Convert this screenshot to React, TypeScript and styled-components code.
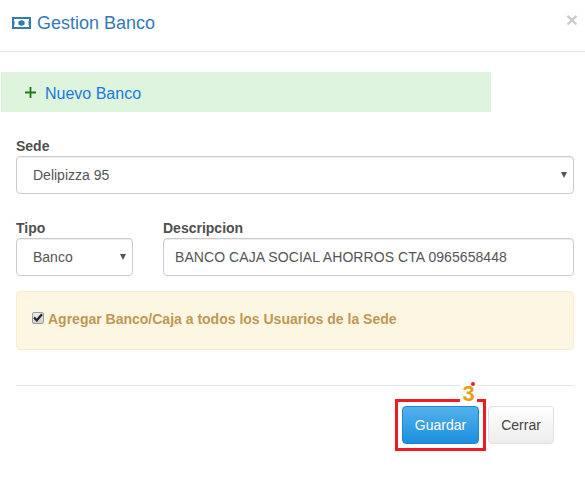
import React from "react";
import styled, { createGlobalStyle } from "styled-components";

const GlobalStyle = createGlobalStyle`
  html, body {
    margin: 0;
    padding: 0;
    background: #fff;
  }
  * {
    box-sizing: border-box;
  }
`;

export default function App() {
  return (
    <>
      <GlobalStyle />
      <Modal>
        <Header>
          <Title>
            <svg width="19" height="12" viewBox="0 0 19 12">
              <path
                fill="#337ab7"
                fillRule="evenodd"
                d="M0 0h19v12H0zM2.5 2v8h14V2z"
              />
              <path fill="#fff" d="M2 2h2.5L2 4.5zM14.5 2H17v2.5zM2 7.5L4.5 10H2zM17 7.5V10h-2.5z" />
              <ellipse cx="9.5" cy="6" rx="3.2" ry="2.8" fill="#337ab7" />
            </svg>
            Gestion Banco
          </Title>
          <Close>×</Close>
        </Header>
        <Banner>
          <svg width="11" height="11" viewBox="0 0 11 11">
            <path fill="#1f7a12" d="M4.6 0h1.8v4.6H11v1.8H6.4V11H4.6V6.4H0V4.6h4.6z" />
          </svg>
          <BannerLink>Nuevo Banco</BannerLink>
        </Banner>
        <Body>
          <Field>
            <Label>Sede</Label>
            <SelectBox>
              <SelectControl defaultValue="Delipizza 95">
                <option>Delipizza 95</option>
              </SelectControl>
            </SelectBox>
          </Field>
          <Row>
            <TipoField>
              <Label>Tipo</Label>
              <SelectBox>
                <SelectControl defaultValue="Banco">
                  <option>Banco</option>
                </SelectControl>
              </SelectBox>
            </TipoField>
            <DescField>
              <Label>Descripcion</Label>
              <TextInput defaultValue="BANCO CAJA SOCIAL AHORROS CTA 0965658448" />
            </DescField>
          </Row>
          <Alert>
            <CheckBox>
              <svg width="10" height="9" viewBox="0 0 10 9">
                <path fill="none" stroke="#222" strokeWidth="2.2" d="M1 4.5l2.8 2.8L9 1.2" />
              </svg>
            </CheckBox>
            Agregar Banco/Caja a todos los Usuarios de la Sede
          </Alert>
          <Divider />
          <Footer>
            <SaveButton>Guardar</SaveButton>
            <CloseButton>Cerrar</CloseButton>
            <Highlight>
              <StepNumber>3</StepNumber>
              <StepDot />
            </Highlight>
          </Footer>
        </Body>
      </Modal>
    </>
  );
}

const Modal = styled.div`
  width: 585px;
  height: 482px;
  background: #fff;
  font-family: "Liberation Sans", Arial, sans-serif;
  font-size: 14px;
  color: #555;
  overflow: hidden;
`;

const Header = styled.div`
  display: flex;
  align-items: center;
  justify-content: space-between;
  height: 52px;
  padding: 0 7px 5px 12px;
  border-bottom: 1px solid #e5e5e5;
`;

const Title = styled.h4`
  display: flex;
  align-items: center;
  gap: 6px;
  margin: 0;
  font-size: 18px;
  font-weight: 400;
  color: #337ab7;
`;

const Close = styled.span`
  margin-bottom: 7px;
  font-size: 21px;
  font-weight: 700;
  line-height: 1;
  color: #000;
  opacity: 0.2;
`;

const Banner = styled.div`
  display: flex;
  align-items: center;
  gap: 9px;
  width: 490px;
  height: 40px;
  margin: 20px 0 0 1px;
  padding-left: 24px;
  background: #dff4dc;
`;

const BannerLink = styled.a`
  margin-top: 4px;
  font-size: 16px;
  color: #1a7ae0;
`;

const Body = styled.div`
  padding: 27px 11px 0 16px;
`;

const Field = styled.div`
  display: flex;
  flex-direction: column;
`;

const Label = styled.label`
  margin-bottom: 2px;
  font-size: 14px;
  line-height: 15px;
  font-weight: 700;
  color: #4f4f4f;
`;

const SelectBox = styled.div`
  position: relative;

  &::after {
    content: "";
    position: absolute;
    right: 7px;
    top: 16px;
    border-left: 3.5px solid transparent;
    border-right: 3.5px solid transparent;
    border-top: 6px solid #555;
  }
`;

const SelectControl = styled.select`
  display: block;
  width: 100%;
  height: 38px;
  padding: 0 12px 0 16px;
  appearance: none;
  background: #fff;
  border: 1px solid #ccc;
  border-radius: 4px;
  box-shadow: inset 0 1px 1px rgba(0, 0, 0, 0.075);
  font-family: inherit;
  font-size: 14px;
  color: #555;
`;

const Row = styled.div`
  display: flex;
  gap: 30px;
  margin-top: 27px;
`;

const TipoField = styled(Field)`
  width: 117px;
`;

const DescField = styled(Field)`
  flex: 1;
`;

const TextInput = styled.input`
  width: 100%;
  height: 38px;
  padding: 0 11px;
  background: #fff;
  border: 1px solid #ccc;
  border-radius: 4px;
  box-shadow: inset 0 1px 1px rgba(0, 0, 0, 0.075);
  font-family: inherit;
  font-size: 14px;
  letter-spacing: 0.07px;
  color: #555;
`;

const Alert = styled.div`
  display: flex;
  align-items: center;
  gap: 4px;
  height: 59px;
  margin-top: 15px;
  padding: 0 0 4px 15px;
  background: #fcf6e3;
  border: 1px solid #faebcc;
  border-radius: 4px;
  font-weight: 700;
  color: #c09853;
`;

const CheckBox = styled.span`
  display: flex;
  align-items: center;
  justify-content: center;
  width: 12px;
  height: 12px;
  margin-bottom: 2px;
  background: linear-gradient(#ececec, #cfcfcf);
  border: 1px solid #9a9a9a;
  border-radius: 2px;
`;

const Divider = styled.hr`
  margin: 35px 0 0;
  border: 0;
  border-top: 1px solid #e5e5e5;
`;

const Footer = styled.div`
  position: relative;
  display: flex;
  justify-content: flex-end;
  gap: 9px;
  padding: 20px 20px 0 0;
`;

const BaseButton = styled.button`
  height: 38px;
  border-radius: 4px;
  font-family: inherit;
  font-size: 14px;
`;

const SaveButton = styled(BaseButton)`
  width: 77px;
  background: linear-gradient(#54b1ea, #1b8fdf);
  border: 1px solid #1b86d3;
  color: #fff;
`;

const CloseButton = styled(BaseButton)`
  width: 66px;
  background: linear-gradient(#fff, #ececec);
  border: 1px solid #e0e0e0;
  color: #444;
`;

const Highlight = styled.div`
  position: absolute;
  left: 379px;
  top: 13px;
  width: 91px;
  height: 52px;
  border: 3px solid #ed1c24;
  pointer-events: none;
`;

const StepNumber = styled.span`
  position: absolute;
  left: 62px;
  top: -19px;
  width: 17px;
  height: 22px;
  background: #fff;
  text-align: center;
  font-size: 22px;
  line-height: 22px;
  font-weight: 700;
  color: #ec9c14;
`;

const StepDot = styled.span`
  position: absolute;
  left: 73px;
  top: -20px;
  width: 4px;
  height: 4px;
  border-radius: 50%;
  background: #ed1c24;
`;
